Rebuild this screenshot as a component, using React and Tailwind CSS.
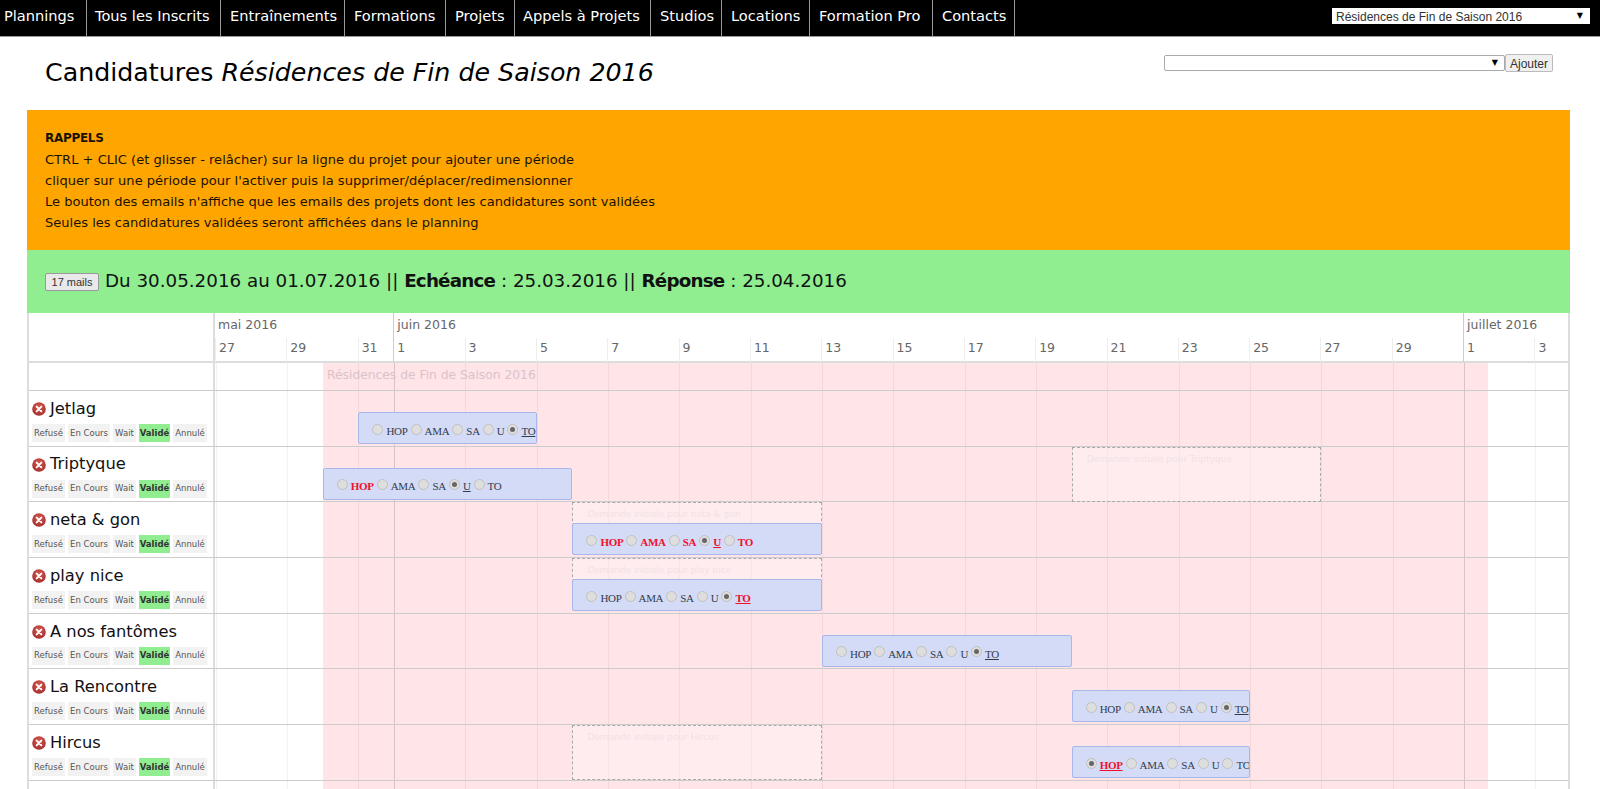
const DAY = 35.66;
const SHIFT = 0.8;
const nav = [
  ['Plannings', 'w-[87px] pl-1'],
  ['Tous les Inscrits', 'w-[134px] pl-[8px]'],
  ['Entraînements', 'w-[124px] pl-[9px]'],
  ['Formations', 'w-[101px] pl-[9px]'],
  ['Projets', 'w-[69px] pl-[9px]'],
  ['Appels à Projets', 'w-[136px] pl-[8px]'],
  ['Studios', 'w-[71px] pl-[9px]'],
  ['Locations', 'w-[88px] pl-[9px]'],
  ['Formation Pro', 'w-[123px] pl-[9px]'],
  ['Contacts', 'w-[82px] pl-[9px]'],
];
const days = [[0,'27'],[2,'29'],[4,'31'],[5,'1'],[7,'3'],[9,'5'],[11,'7'],[13,'9'],[15,'11'],[17,'13'],[19,'15'],[21,'17'],[23,'19'],[25,'21'],[27,'23'],[29,'25'],[31,'27'],[33,'29'],[35,'1'],[37,'3']];
const months = [[0,'mai 2016'],[5,'juin 2016'],[35,'juillet 2016']];
const L = ['HOP','AMA','SA','U','TO'];
const tags = [['Refusé','w-[33px]'],['En Cours','w-[42px]'],['Wait','w-[23px]'],['Validé','w-[31px]'],['Annulé','w-[34px]']];
const rows = [
  { name:'Jetlag', start:4, days:5, sel:4, red:[] },
  { name:'Triptyque', start:3, days:7, sel:3, red:[0], ghost:[24,7] },
  { name:'neta & gon', start:10, days:7, sel:3, red:[0,1,2,3,4], ghost:[10,7] },
  { name:'play nice', start:10, days:7, sel:4, red:[4], ghost:[10,7] },
  { name:'A nos fantômes', start:17, days:7, sel:4, red:[] },
  { name:'La Rencontre', start:24, days:5, sel:4, red:[] },
  { name:'Hircus', start:24, days:5, sel:0, red:[0], ghost:[10,7] },
];

function XIcon() {
  return (
    <svg width="14" height="14" viewBox="0 0 16 16" className="shrink-0">
      <defs>
        <radialGradient id="xred" cx="50%" cy="35%" r="70%">
          <stop offset="0%" stopColor="#d65a50" />
          <stop offset="100%" stopColor="#a32a2a" />
        </radialGradient>
      </defs>
      <circle cx="8" cy="8" r="7.8" fill="url(#xred)" />
      <path d="M5.3 5.3l5.4 5.4M10.7 5.3l-5.4 5.4" stroke="#fff" strokeWidth="2.2" strokeLinecap="round" />
    </svg>
  );
}

function Radio({ on }) {
  return (
    <span className="relative top-[-2px] inline-flex w-[11px] h-[11px] shrink-0 items-center justify-center rounded-full border border-[#c0c0c0] bg-[#dedede]">
      {on && <span className="w-[5px] h-[5px] rounded-full bg-[#666]" />}
    </span>
  );
}

function Event({ r }) {
  return (
    <div
      className="absolute top-[21px] h-[32px] overflow-hidden rounded-[2px] border border-[#a9b6ec] bg-[#d3dbf6] pl-[13px] pt-[6px] flex items-center gap-[3px] whitespace-nowrap font-['Liberation_Serif',serif] text-[11px] tracking-[-0.3px] text-[#333c4d] z-20"
      style={{ left: r.start * DAY + SHIFT, width: r.days * DAY }}
    >
      {L.map((l, i) => (
        <span key={l} className="flex items-center gap-[3px]">
          <Radio on={r.sel === i} />
          <span className={(r.red.includes(i) ? 'text-[#f0102c] font-bold ' : '') + (r.sel === i ? 'underline' : '')}>{l}</span>
        </span>
      ))}
    </div>
  );
}

function Row({ r }) {
  const behind = r.ghost && r.ghost[0] === r.start;
  return (
    <div className="flex h-[55.7px] border-b border-[#ccc]">
      <div className="w-[186px] shrink-0 border-r-2 border-[#ddd] pl-[3px] pt-[8px]">
        <div className="flex items-center gap-[4px] h-[20px] text-[16.3px] text-[#111] whitespace-nowrap">
          <XIcon />
          <span>{r.name}</span>
        </div>
        <div className="flex gap-[3px] mt-[5px]">
          {tags.map(([t, w]) => (
            <span key={t} className={'h-[18px] flex items-center justify-center whitespace-nowrap text-[8.5px] ' + w + (t === 'Validé' ? ' bg-[#90ee90] font-bold text-[#333]' : ' bg-[#f2f2f2] text-[#555]')}>
              {t}
            </span>
          ))}
        </div>
      </div>
      <div className="relative flex-1">
        {r.ghost && (
          <div
            className={"absolute top-0 border border-dashed border-[#aaa] bg-white/30 pl-[14px] pt-[5px] text-[9px] text-[#efe2e5] whitespace-nowrap z-10 " + (behind ? 'h-[30px] border-b-0' : 'h-[55px]')}
            style={{ left: r.ghost[0] * DAY + SHIFT, width: r.ghost[1] * DAY }}
          >
            Demande initiale pour {r.name}
          </div>
        )}
        <Event r={r} />
      </div>
    </div>
  );
}

function Arrow() {
  return <span className="pointer-events-none absolute right-[7px] top-[2px] text-[8px] leading-[12px] text-black">▼</span>;
}

export default function App() {
  return (
    <div className="h-screen overflow-hidden bg-white font-['DejaVu_Sans',sans-serif] text-black">
      <header className="flex h-[37px] items-center justify-between border-b border-[#999] bg-black">
        <nav className="flex h-full">
          {nav.map(([t, c]) => (
            <a key={t} className={"flex items-center border-r border-[#999] pb-[4px] text-[14.6px] text-white whitespace-nowrap " + c}>{t}</a>
          ))}
        </nav>
        <div className="relative mb-[4px] mr-[10px]">
          <select className="block h-[16px] w-[258px] appearance-none bg-white pl-[4px] font-['Liberation_Sans',sans-serif] text-[12px] text-[#333]">
            <option>Résidences de Fin de Saison 2016</option>
          </select>
          <Arrow />
        </div>
      </header>

      <div className="flex h-[73px] items-start justify-between pl-[45px] pr-[47px]">
        <h1 className="mt-[19px] text-[25.3px] leading-[34px] whitespace-nowrap">
          Candidatures <em>Résidences de Fin de Saison 2016</em>
        </h1>
        <div className="mt-[17px] flex items-center">
          <div className="relative">
            <select className="block h-[16px] w-[341px] appearance-none rounded-[2px] border border-[#aaa] bg-white" />
            <Arrow />
          </div>
          <button className="h-[18px] w-[48px] rounded-[2px] border border-[#bbb] bg-[#f0f0f0] font-['Liberation_Sans',sans-serif] text-[12px] text-[#333]">Ajouter</button>
        </div>
      </div>

      <div className="ml-[27px] mr-[30px]">
        <section className="h-[140px] bg-[#ffa500] pl-[18px] pt-[18px] text-[13.05px] leading-[21px] text-[#1a1200]">
          <p className="text-[12px] font-bold tracking-[-0.3px]">RAPPELS</p>
          <p>CTRL + CLIC (et glisser - relâcher) sur la ligne du projet pour ajouter une période</p>
          <p>cliquer sur une période pour l'activer puis la supprimer/déplacer/redimensionner</p>
          <p>Le bouton des emails n'affiche que les emails des projets dont les candidatures sont validées</p>
          <p>Seules les candidatures validées seront affichées dans le planning</p>
        </section>

        <section className="flex h-[63px] items-center gap-[6px] bg-[#90ee90] pb-[2px] pl-[18px]">
          <button className="mt-[3px] h-[18px] w-[54px] rounded-[2px] border border-[#999] bg-[#e9e9e9] font-['Liberation_Sans',sans-serif] text-[11px] text-[#333]">17 mails</button>
          <span className="text-[18.3px] whitespace-nowrap text-[#111]">Du 30.05.2016 au 01.07.2016 || <b className="tracking-[-0.8px]">Echéance</b> : 25.03.2016 || <b className="tracking-[-0.8px]">Réponse</b> : 25.04.2016</span>
        </section>

        <section className="relative border-x-2 border-[#ddd]">
          <div className="flex h-[50px] border-b-2 border-[#ddd]">
            <div className="w-[186px] shrink-0 border-r-2 border-[#ddd]" />
            <div className="relative flex-1 text-[12.5px] text-[#666]">
              {months.map(([d, t]) => (
                <span key={t} className={"absolute top-0 h-[25px] whitespace-nowrap pl-[3px] pt-[3px] " + (d ? 'border-l border-[#ccc]' : '')} style={{ left: d * DAY }}>{t}</span>
              ))}
              {days.map(([d, t]) => (
                <span key={d} className={"absolute top-[25px] h-[24px] whitespace-nowrap border-l pl-[3px] leading-[20px] " + (d === 5 || d === 35 ? 'border-[#ccc]' : 'border-[#eee]')} style={{ left: d * DAY }}>{t}</span>
              ))}
            </div>
          </div>

          <div className="relative">
            <div className="pointer-events-none absolute inset-y-0 left-[186px] right-0">
              <div className="absolute inset-y-0 left-[108px] w-[1165px] bg-[#ffe4e8]" />
              {days.map(([d]) => (
                <span key={d} className={'absolute inset-y-0 w-px ' + (d === 5 || d === 35 ? 'bg-black/15' : 'bg-black/5')} style={{ left: d * DAY + SHIFT }} />
              ))}
              <span className="absolute left-[112px] top-[3px] text-[12.3px] text-[#d9c3c9] whitespace-nowrap">Résidences de Fin de Saison 2016</span>
            </div>
            <div className="relative">
              <div className="flex h-[28px] border-b border-[#ccc]">
                <div className="w-[186px] shrink-0 border-r-2 border-[#ddd]" />
              </div>
              {rows.map((r) => <Row key={r.name} r={r} />)}
              <div className="flex h-[56px]">
                <div className="w-[186px] shrink-0 border-r-2 border-[#ddd]" />
              </div>
            </div>
          </div>
        </section>
      </div>
    </div>
  );
}
